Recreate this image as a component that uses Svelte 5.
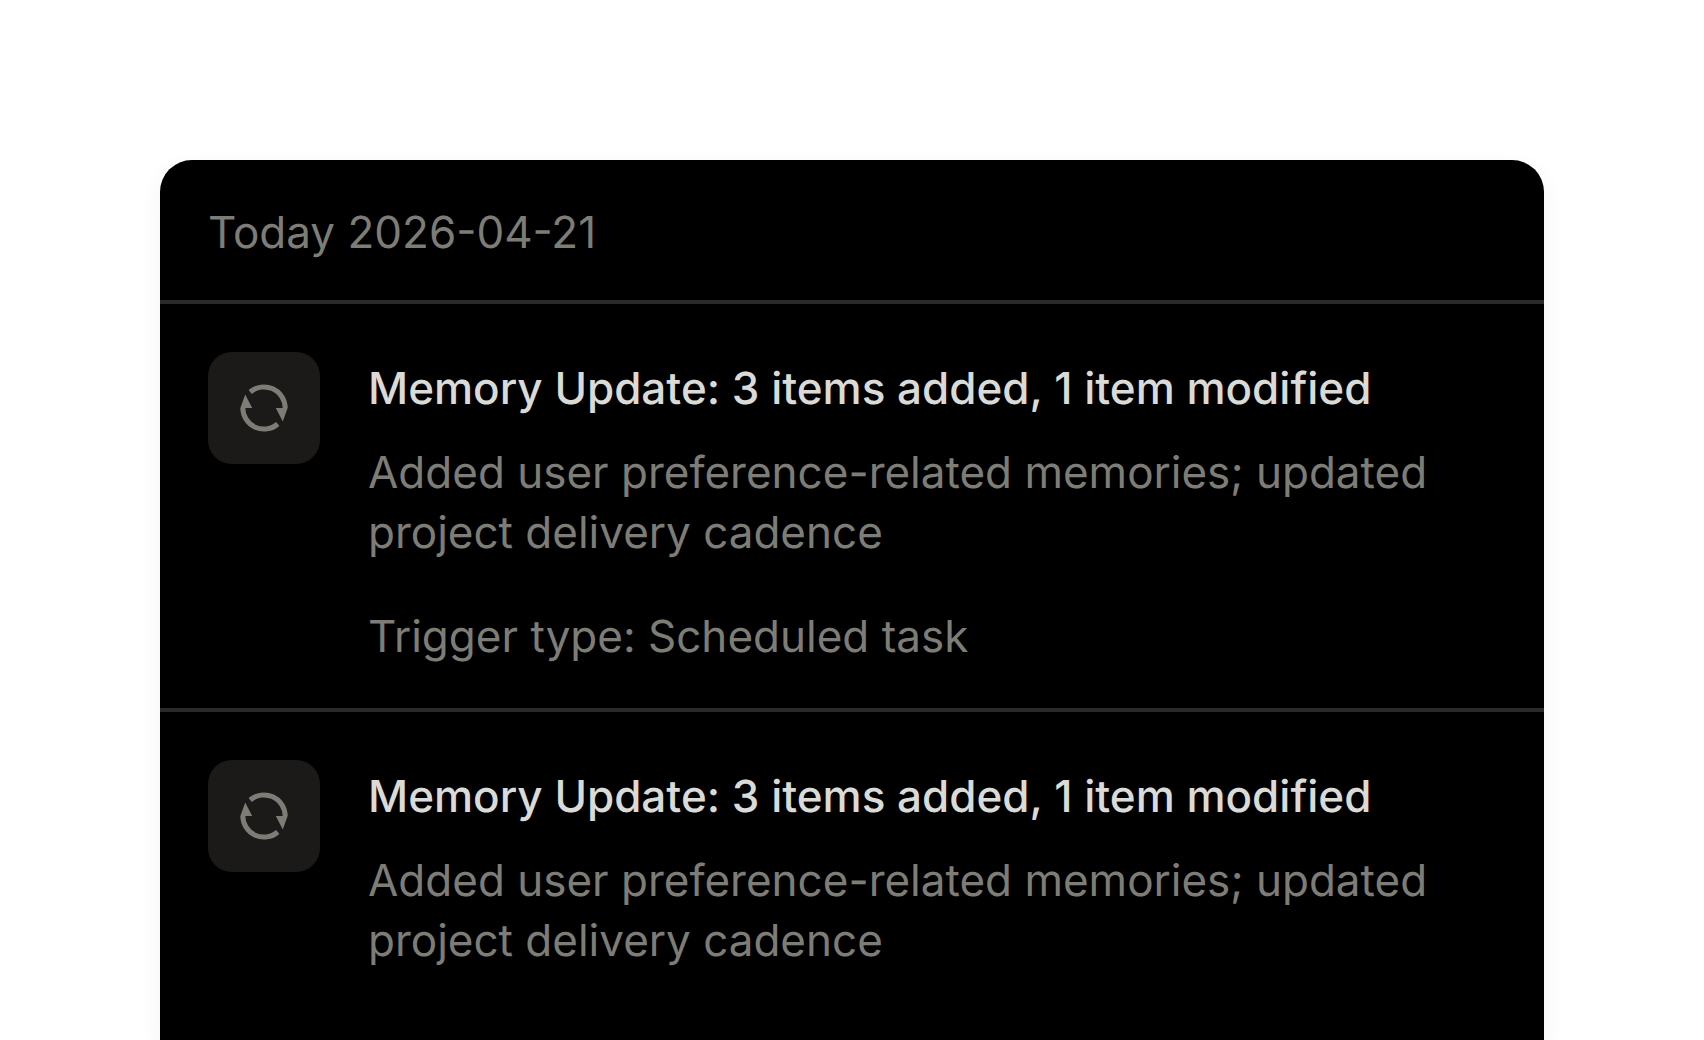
<script lang="ts">
  type MemoryEvent = {
    id: number;
    title: string;
    description: string;
    trigger?: string;
  };

  export let date = '2026-04-21';

  export let events: MemoryEvent[] = [
    {
      id: 1,
      title: 'Memory Update: 3 items added, 1 item modified',
      description: 'Added user preference-related memories; updated project delivery cadence',
      trigger: 'Scheduled task',
    },
    {
      id: 2,
      title: 'Memory Update: 3 items added, 1 item modified',
      description: 'Added user preference-related memories; updated project delivery cadence',
    },
  ];
</script>

<main class="viewport">
  <section class="log-card">
    <header class="log-header">Today <time datetime={date}>{date}</time></header>
    <ul class="event-list">
      {#each events as event (event.id)}
        <li class="event">
          <div class="event-icon">
            <svg viewBox="0 0 56 56" aria-hidden="true">
              <path class="arc" d="M14.2 12A21.2 21.2 0 0 1 49.2 28" />
              <path class="arc" d="M41.8 44A21.2 21.2 0 0 1 6.8 28" />
              <path class="tip" d="M9.2 14.6L16.2 28H4.4Z" />
              <path class="tip" d="M46.8 41.4L39.8 28H51.6Z" />
            </svg>
          </div>
          <div class="event-body">
            <h2 class="event-title">{event.title}</h2>
            <p class="event-description">{event.description}</p>
            {#if event.trigger}
              <p class="event-trigger">Trigger type: {event.trigger}</p>
            {/if}
          </div>
        </li>
      {/each}
    </ul>
  </section>
</main>

<style>
  :global(body) {
    background: #ffffff;
  }

  .viewport {
    display: flex;
    flex-direction: column;
    box-sizing: border-box;
    min-height: 100vh;
    padding: 160px 160px 0;
    font-family: Inter, 'Liberation Sans', sans-serif;
    font-size: 44px;
    text-rendering: geometricPrecision;
  }

  .log-card {
    flex: 1;
    border-radius: 32px 32px 0 0;
    background: #000000;
    box-shadow: 0 8px 24px rgba(0, 0, 0, 0.05);
    color: #7d7d76;
    overflow: hidden;
  }

  .log-header {
    padding: 48px 48px 44px;
    border-bottom: 4px solid #2b2a28;
    line-height: 48px;
  }

  .event-list {
    margin: 0;
    padding: 0;
    list-style: none;
  }

  .event {
    display: flex;
    gap: 48px;
    padding: 48px;
  }

  .event + .event {
    border-top: 4px solid #2b2a28;
  }

  .event-icon {
    display: flex;
    flex: none;
    align-items: center;
    justify-content: center;
    width: 112px;
    height: 112px;
    border-radius: 24px;
    background: #1b1a18;
  }

  .event-icon svg {
    width: 56px;
    height: 56px;
  }

  .arc {
    fill: none;
    stroke: #7d7d76;
    stroke-width: 5;
  }

  .tip {
    fill: #7d7d76;
  }

  .event-body {
    flex: 1;
    min-width: 0;
  }

  .event-title,
  .event-description,
  .event-trigger {
    margin: 0;
    font-size: 44px;
    font-weight: 400;
  }

  .event-title {
    color: #dadad6;
    font-weight: 500;
    line-height: 72px;
  }

  .event-description {
    margin-top: 18px;
    line-height: 60px;
  }

  .event-trigger {
    margin-top: 50px;
    line-height: 48px;
  }
</style>
